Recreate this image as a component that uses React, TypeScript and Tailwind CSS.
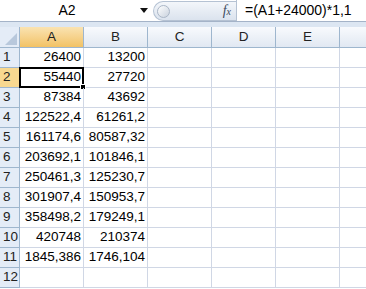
const rows: [string, string][] = [
  ['26400', '13200'],
  ['55440', '27720'],
  ['87384', '43692'],
  ['122522,4', '61261,2'],
  ['161174,6', '80587,32'],
  ['203692,1', '101846,1'],
  ['250461,3', '125230,7'],
  ['301907,4', '150953,7'],
  ['358498,2', '179249,1'],
  ['420748', '210374'],
  ['1845,386', '1746,104'],
  ['', ''],
]

const cols = ['A', 'B', 'C', 'D', 'E', '']

function FormulaBar() {
  return (
    <div className="flex h-[22px] border-b border-[#a4b3c8] bg-white">
      <div className="flex w-[134px] items-center justify-center text-[14px] text-black">A2</div>
      <div className="flex w-[19px] items-center justify-center">
        <svg width="8" height="5" viewBox="0 0 8 5">
          <path d="M0 0 L8 0 L4 5 Z" fill="#111" />
        </svg>
      </div>
      <div className="mt-[1px] flex h-[20px] w-[83px] items-center rounded-l-full border border-r-0 border-[#b5c2d3] bg-gradient-to-b from-[#f3f6fa] to-[#dbe3ee]">
        <div className="ml-[3px] h-[13px] w-[13px] rounded-full border border-[#aab6c6] bg-gradient-to-br from-white to-[#c9d2de]" />
        <div className="ml-auto mr-[5px] font-['Liberation_Serif'] text-[14px] italic leading-none text-[#3b4a5e]">
          f<span className="text-[10px]">x</span>
        </div>
      </div>
      <div className="flex flex-1 items-center border-l border-[#b5c2d3] pl-[8px] text-[14px] text-black">
        =(A1+24000)*1,1
      </div>
    </div>
  )
}

function Corner() {
  return (
    <div className="relative h-[21px] border-b border-r border-[#9eb6ce] bg-[#e4ecf7]">
      <svg className="absolute bottom-[2px] right-[2px]" width="12" height="12" viewBox="0 0 12 12">
        <path d="M12 0 L12 12 L0 12 Z" fill="#b8c8dc" />
      </svg>
    </div>
  )
}

export default function App() {
  return (
    <div className="h-[289px] w-[366px] overflow-hidden bg-white font-['Liberation_Sans'] text-[13.5px] text-black">
      <FormulaBar />
      <div className="h-[5px] bg-[#dce6f2]" />
      <div className="grid grid-cols-[20px_64px_64px_64px_64px_64px_64px]">
        <Corner />
        {cols.map((c, i) => (
          <div
            key={i}
            className={
              i === 0
                ? 'flex h-[21px] items-center justify-center border-b border-r border-[#9eb6ce] bg-gradient-to-b from-[#fae3b1] to-[#f2c264] text-[#222]'
                : 'flex h-[21px] items-center justify-center border-b border-r border-[#9eb6ce] bg-gradient-to-b from-[#f8fafd] to-[#e1e8f2] text-[#222]'
            }
          >
            {c}
          </div>
        ))}
        {rows.map((r, ri) => (
          <div key={ri} className="contents">
            <div
              className={
                ri === 1
                  ? 'flex h-[20px] items-center border-b border-r border-[#9eb6ce] bg-[#f8d890] pl-[3px] text-[#222]'
                  : 'flex h-[20px] items-center border-b border-r border-[#9eb6ce] bg-[#e4ecf7] pl-[3px] text-[#222]'
              }
            >
              {ri + 1}
            </div>
            <div className="relative flex h-[20px] items-center justify-end border-b border-r border-[#d0d7e5] pr-[2px]">
              {r[0]}
              {ri === 1 && (
                <>
                  <div className="absolute -left-[1px] -top-[1px] h-[21px] w-[65px] border-2 border-black" />
                  <div className="absolute -bottom-[3px] -right-[3px] h-[6px] w-[6px] border border-white bg-black" />
                </>
              )}
            </div>
            <div className="flex h-[20px] items-center justify-end border-b border-r border-[#d0d7e5] pr-[2px]">
              {r[1]}
            </div>
            <div className="h-[20px] border-b border-r border-[#d0d7e5]" />
            <div className="h-[20px] border-b border-r border-[#d0d7e5]" />
            <div className="h-[20px] border-b border-r border-[#d0d7e5]" />
            <div className="h-[20px] border-b border-r border-[#d0d7e5]" />
          </div>
        ))}
      </div>
    </div>
  )
}
